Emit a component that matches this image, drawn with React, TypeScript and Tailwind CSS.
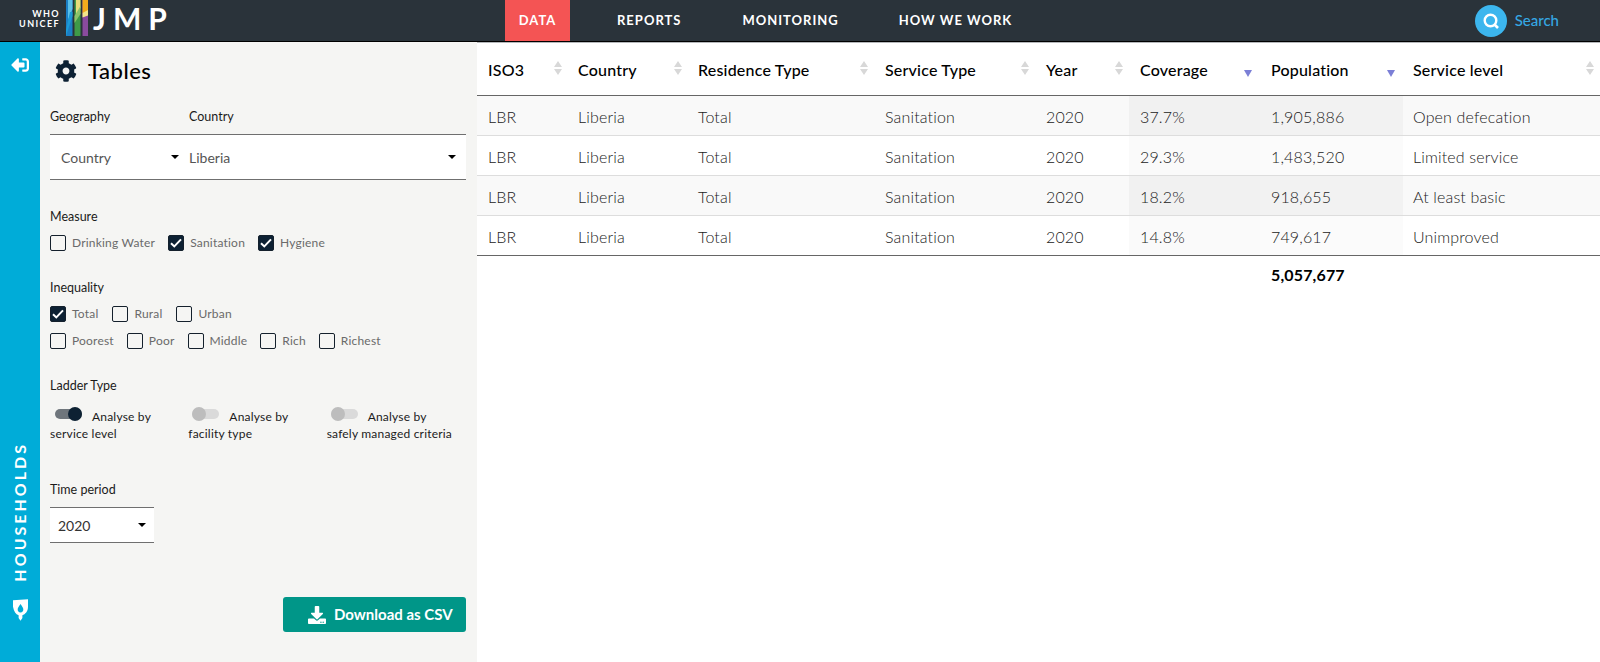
import { FaCog, FaDownload, FaSignOutAlt } from 'react-icons/fa'

const rows = [
  ['37.7%', '1,905,886', 'Open defecation'],
  ['29.3%', '1,483,520', 'Limited service'],
  ['18.2%', '918,655', 'At least basic'],
  ['14.8%', '749,617', 'Unimproved'],
]

const columns = [
  { label: 'ISO3', width: 'w-[91px] pl-[11px]' },
  { label: 'Country', width: 'w-[120px] pl-[10px]' },
  { label: 'Residence Type', width: 'w-[186px] pl-[10px]' },
  { label: 'Service Type', width: 'w-[161px] pl-[11px]' },
  { label: 'Year', width: 'w-[94px] pl-[11px]' },
  { label: 'Coverage', width: 'w-[131px] pl-[11px]', active: true },
  { label: 'Population', width: 'w-[143px] pl-[11px]', active: true },
  { label: 'Service level', width: 'w-[197px] pl-[10px]' },
]

function Caret() {
  return <span className="h-0 w-0 border-x-[4px] border-t-[4px] border-x-transparent border-t-black" />
}

function SortArrows({ active }: { active?: boolean }) {
  if (active) {
    return (
      <span className="absolute right-[8px] top-[28px] h-0 w-0 border-x-[4px] border-t-[7px] border-x-transparent border-t-[#7b7fd6]" />
    )
  }
  return (
    <span className="absolute right-[6px] top-[19px] flex flex-col gap-[2px]">
      <span className="h-0 w-0 border-x-[4px] border-b-[6px] border-x-transparent border-b-[#d8d8d8]" />
      <span className="h-0 w-0 border-x-[4px] border-t-[6px] border-x-transparent border-t-[#d8d8d8]" />
    </span>
  )
}

function Check({ label, checked }: { label: string; checked?: boolean }) {
  return (
    <div className="flex items-center gap-[6px]">
      <span
        className={`flex h-[16px] w-[16px] items-center justify-center rounded-[2px] border-[1.5px] border-[#14202c] ${
          checked ? 'bg-[#0d2133]' : 'bg-transparent'
        }`}
      >
        {checked && (
          <svg width="12" height="10" viewBox="0 0 12 10" fill="none">
            <path d="M1 5.2 4.3 8.4 11 1.4" stroke="white" strokeWidth="2" />
          </svg>
        )}
      </span>
      <span className="text-[12px] leading-none tracking-[0.2px] text-[#6a6a6a]">{label}</span>
    </div>
  )
}

function Toggle({ on }: { on?: boolean }) {
  return (
    <span className="relative block h-[10px] w-[27px] shrink-0 rounded-full">
      <span className={`absolute inset-0 rounded-full ${on ? 'bg-[#6f767c]' : 'bg-[#dadada]'}`} />
      <span
        className={`absolute top-[-2px] h-[14px] w-[14px] rounded-full ${
          on ? 'right-0 bg-[#0d2133]' : 'left-0 bg-[#bdbdbd]'
        }`}
      />
    </span>
  )
}

function Ladder({ on, second, pad, width }: { on?: boolean; second: string; pad: string; width: string }) {
  return (
    <div className={`${width} text-[12px] leading-[16px] tracking-[0.2px] text-[#1b1b1b]`}>
      <div className={`flex items-center gap-[10px] ${pad}`}>
        <Toggle on={on} />
        <span className="mt-[7px]">Analyse by</span>
      </div>
      <div className="mt-[1px]">{second}</div>
    </div>
  )
}

function Logo() {
  return (
    <svg width="24" height="36" viewBox="0 0 24 36" className="shrink-0">
      <rect x="0" y="0" width="6.5" height="36" fill="#1b7fc4" />
      <path d="M2 0h4.5v9L2 20z" fill="#5cc0e8" />
      <path d="M0 30 4 12h2.5v4L0 36z" fill="#1b9ad6" />
      <rect x="8.5" y="0" width="6" height="36" fill="#3f9a48" />
      <path d="M10 0h4.5v8L10 16z" fill="#e6dc7a" />
      <path d="M8.5 16 14.5 6v8l-6 9z" fill="#8cc36a" />
      <rect x="16.5" y="0" width="5.5" height="36" fill="#8a4b9e" />
      <rect x="16.5" y="0" width="5.5" height="13" fill="#f2ac1c" />
      <path d="M16.5 13 22 10v5.5l-5.500 2z" fill="#f2e58a" />
    </svg>
  )
}

export default function App() {
  return (
    <div className="flex h-[662px] w-[1600px] flex-col overflow-hidden bg-white font-['Lato',sans-serif]">
      <header className="flex h-[42px] shrink-0 items-stretch border-b-[1px] border-black bg-[#2a333a] shadow-[0_1px_0_#b5b8bb]">
        <div className="flex w-[505px] shrink-0 items-start">
          <div className="ml-[20px] mt-[9px] flex w-[40px] flex-col items-end text-[9px] font-bold leading-[10px] tracking-[1.4px] text-white">
            <span>WHO</span>
            <span>UNICEF</span>
          </div>
          <div className="ml-[6px]">
            <Logo />
          </div>
          <span className="ml-[3px] mt-[1px] text-[30px] font-bold leading-[34px] tracking-[7px] text-white">JMP</span>
        </div>
        <nav className="flex items-stretch text-[13px] font-bold tracking-[1px] text-white">
          <div className="flex w-[65px] items-center justify-center bg-[#f45454]">DATA</div>
          <div className="ml-[47px] flex items-center">REPORTS</div>
          <div className="ml-[61px] flex items-center">MONITORING</div>
          <div className="ml-[60px] flex items-center">HOW WE WORK</div>
        </nav>
        <div className="ml-auto mr-[41px] flex items-center gap-[8px]">
          <span className="flex h-[32px] w-[32px] items-center justify-center rounded-full bg-[#3cb6ee]">
            <svg width="18" height="18" viewBox="0 0 18 18" fill="none">
              <circle cx="8.500" cy="8.500" r="5.800" stroke="white" strokeWidth="2.400" />
              <path d="M12.500 12.500 16 16" stroke="white" strokeWidth="2.600" />
            </svg>
          </span>
          <span className="text-[15px] font-medium text-[#35a8e4]">Search</span>
        </div>
      </header>

      <div className="flex min-h-0 flex-1">
        <aside className="flex w-[40px] shrink-0 flex-col items-center justify-between bg-[#00acd8] pb-[40px] pt-[14px] text-white">
          <FaSignOutAlt className="h-[18px] w-[18px] -scale-x-100" />
          <div className="flex flex-col items-center">
            <span className="rotate-180 text-[16px] font-bold tracking-[3px] [writing-mode:vertical-rl]">
              HOUSEHOLDS
            </span>
            <svg width="15" height="23" viewBox="0 0 16 24" className="mt-[17px]">
              <path d="M0 1 16 0v8c0 5-3 8-6 9v3L8 23l-2-3v-3C3 16 1 13 0 8z" fill="white" />
              <path d="M8 5c2 3 3 4 3 6a3 3 0 0 1-6 0c0-2 1-3 3-6z" fill="#00acd8" />
            </svg>
          </div>
        </aside>

        <section className="flex w-[437px] shrink-0 flex-col bg-[#f5f5f3] pl-[10px] pr-[11px]">
          <div className="mt-[15px] flex items-center gap-[11px] pl-[5px] text-black">
            <FaCog className="h-[22px] w-[22px] text-[#0d2133]" />
            <h1 className="text-[22px] font-medium leading-[28px] tracking-[0.5px]">Tables</h1>
          </div>

          <div className="mt-[24px] flex text-[12.5px] leading-[16px] text-[#1b1b1b]">
            <span className="w-[139px]">Geography</span>
            <span>Country</span>
          </div>
          <div className="mt-[9px] flex h-[46px] items-center border-y border-[#6f6f6f] bg-white text-[14px] text-[#555]">
            <div className="flex w-[139px] items-center justify-between pl-[11px] pr-[10px]">
              <span>Country</span>
              <Caret />
            </div>
            <div className="flex flex-1 items-center justify-between pr-[10px]">
              <span>Liberia</span>
              <Caret />
            </div>
          </div>

          <div className="mt-[29px] text-[12.5px] leading-[16px] text-[#1b1b1b]">Measure</div>
          <div className="mt-[10px] flex gap-[13px]">
            <Check label="Drinking Water" />
            <Check label="Sanitation" checked />
            <Check label="Hygiene" checked />
          </div>

          <div className="mt-[29px] text-[12.5px] leading-[16px] text-[#1b1b1b]">Inequality</div>
          <div className="mt-[10px] flex gap-[14px]">
            <Check label="Total" checked />
            <Check label="Rural" />
            <Check label="Urban" />
          </div>
          <div className="mt-[11px] flex gap-[13px]">
            <Check label="Poorest" />
            <Check label="Poor" />
            <Check label="Middle" />
            <Check label="Rich" />
            <Check label="Richest" />
          </div>

          <div className="mt-[29px] text-[12.5px] leading-[16px] text-[#1b1b1b]">Ladder Type</div>
          <div className="mt-[8px] flex">
            <Ladder on second="service level" pad="pl-[5px]" width="w-[139px]" />
            <Ladder second="facility type" pad="pl-[4px]" width="w-[139px]" />
            <Ladder second="safely managed criteria" pad="pl-[4px]" width="w-[140px]" />
          </div>

          <div className="mt-[40px] text-[12.5px] leading-[16px] text-[#1b1b1b]">Time period</div>
          <div className="mt-[9px] flex h-[36px] w-[104px] items-center justify-between border-y border-[#6f6f6f] bg-white pl-[8px] pr-[8px] text-[14px] text-[#333]">
            <span>2020</span>
            <Caret />
          </div>

          <button className="ml-auto mt-[54px] flex h-[35px] w-[183px] items-center gap-[8px] rounded-[3px] bg-[#009688] pl-[25px] text-[15px] font-bold text-white">
            <FaDownload className="h-[18px] w-[18px]" />
            Download as CSV
          </button>
        </section>

        <main className="flex-1">
          <table className="w-[1123px] table-fixed border-collapse text-[16px] font-light tracking-[0.15px] text-[#222]">
            <thead>
              <tr className="h-[53px] border-b border-[#666] text-left text-black">
                {columns.map(c => (
                  <th key={c.label} className={`relative pr-[10px] pt-[3px] text-[16px] font-medium tracking-[0.2px] ${c.width}`}>
                    {c.label}
                    <SortArrows active={c.active} />
                  </th>
                ))}
              </tr>
            </thead>
            <tbody>
              {rows.map((r, i) => (
                <tr key={r[2]} className={`h-[40px] border-b ${i === 3 ? 'border-[#666]' : 'border-[#ddd]'} ${i % 2 === 0 ? 'bg-[#f9f9f9]' : 'bg-white'}`}>
                  <td className="pl-[11px] pt-[3px]">LBR</td>
                  <td className="pl-[10px] pt-[3px]">Liberia</td>
                  <td className="pl-[10px] pt-[3px]">Total</td>
                  <td className="pl-[11px] pt-[3px]">Sanitation</td>
                  <td className="pl-[11px] pt-[3px]">2020</td>
                  <td className={`pl-[11px] pt-[3px] ${i % 2 === 0 ? 'bg-[#f1f1f1]' : 'bg-[#fafafa]'}`}>{r[0]}</td>
                  <td className={`pl-[11px] pt-[3px] ${i % 2 === 0 ? 'bg-[#f2f2f2]' : 'bg-[#fbfbfb]'}`}>{r[1]}</td>
                  <td className="pl-[10px] pt-[3px]">{r[2]}</td>
                </tr>
              ))}
              <tr className="h-[40px]">
                <td colSpan={6} />
                <td className="pl-[11px] font-bold text-black">5,057,677</td>
                <td />
              </tr>
            </tbody>
          </table>
        </main>
      </div>
    </div>
  )
}
